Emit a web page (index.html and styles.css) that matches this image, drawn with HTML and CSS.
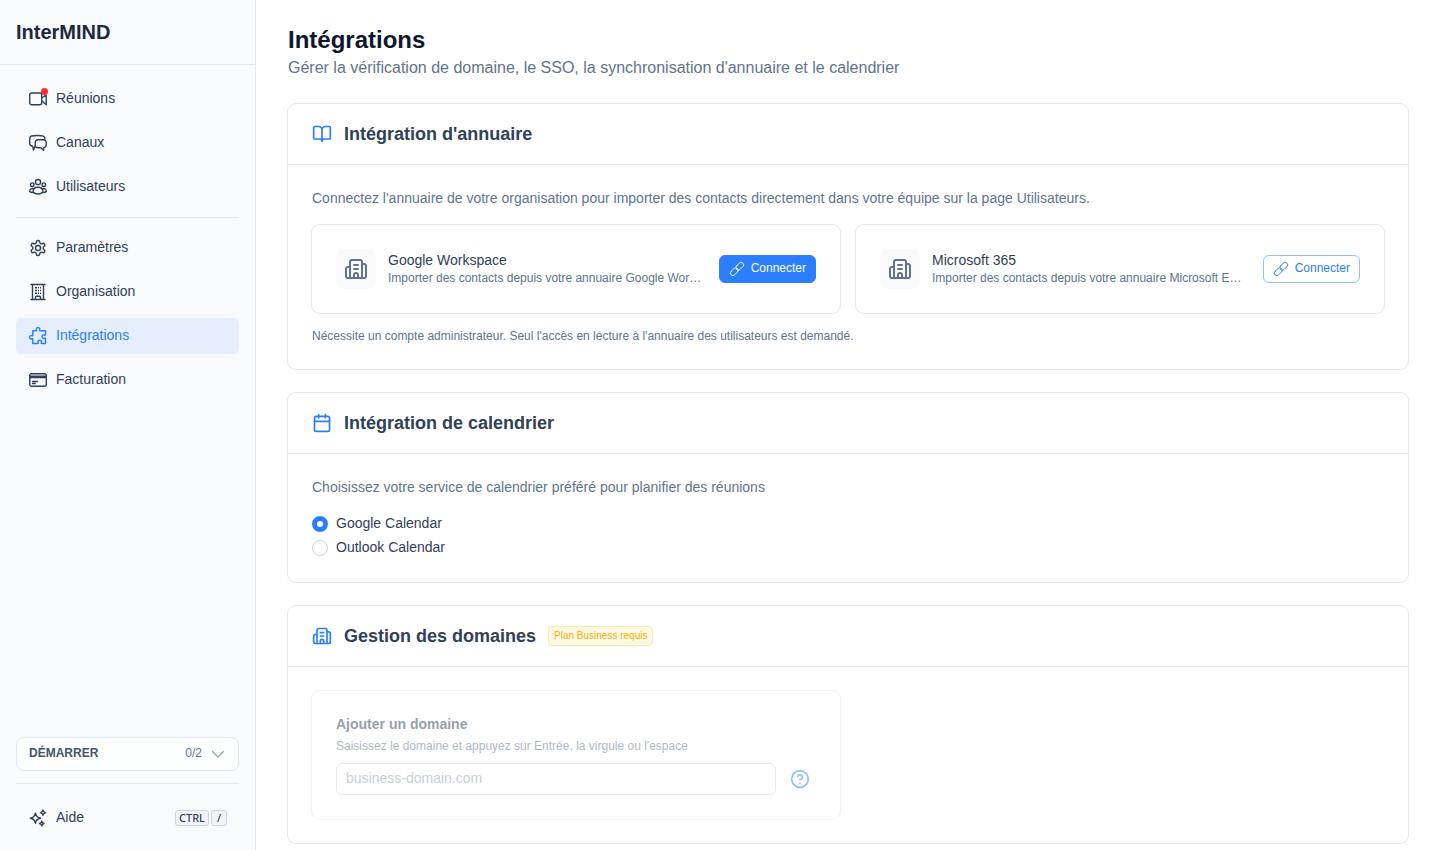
FILE: index.html
```html
<!DOCTYPE html>
<html lang="fr">
  <head>
    <meta charset="utf-8">
    <meta name="viewport" content="width=device-width, initial-scale=1">
    <title>Intégrations - InterMIND</title>
    <link rel="stylesheet" href="styles.css">
  </head>
  <body>
    <!-- shared icons -->
    <svg class="sprite" aria-hidden="true">
      <symbol id="building" viewBox="0 0 24 24">
        <path d="M10 12h4M10 8h4M14 21v-3a2 2 0 0 0-4 0v3"/>
        <path d="M6 10H4a2 2 0 0 0-2 2v7a2 2 0 0 0 2 2h16a2 2 0 0 0 2-2V9a2 2 0 0 0-2-2h-2"/>
        <path d="M6 21V5a2 2 0 0 1 2-2h8a2 2 0 0 1 2 2v16"/>
      </symbol>
      <symbol id="link" viewBox="0 0 16 16">
        <rect x="6.200" y="2.800" width="9" height="5" rx="2.500" transform="rotate(-45 10.700 5.300)"/>
        <rect x=".8" y="8.200" width="9" height="5" rx="2.500" transform="rotate(-45 5.300 10.700)"/>
      </symbol>
    </svg>

    <div class="layout">
      <aside class="sidebar">
        <div class="brand">InterMIND</div>

        <nav class="menu">
          <a class="menu-item" href="#">
            <span class="menu-icon">
              <svg class="icon" viewBox="0 0 20 20"><rect x="1.700" y="4" width="12" height="11.800" rx="2"/><path d="M13.700 9l4.500-3v9.700l-4.500-4"/></svg>
              <span class="dot"></span>
            </span>
            Réunions
          </a>
          <a class="menu-item" href="#">
            <svg class="icon" viewBox="0 0 20 20"><path d="M7.200 13.400H6.800L5.500 17.200L4.600 13.200C2.600 12.900 1.700 11.900 1.700 10.300V5.500C1.700 2.900 3.500 2.500 9.500 2.500S16.700 3 17 6"/><path d="M9.800 6.800h5.800a2.600 2.600 0 0 1 2.600 2.600v2.700c0 1.400-.9 2.300-2.200 2.500l-.6 2.700-2.600-2.500h-3a2.600 2.600 0 0 1-2.600-2.600V9.400a2.600 2.600 0 0 1 2.600-2.600z"/></svg>
            Canaux
          </a>
          <a class="menu-item" href="#">
            <svg class="icon" viewBox="0 0 20 20"><circle cx="10" cy="5.100" r="2.600"/><circle cx="4.200" cy="7.700" r="1.800"/><circle cx="15.800" cy="7.700" r="1.800"/><path d="M5 14.700c0-3 2.100-4.500 5-4.500s5 1.500 5 4.500c-1 1.600-2.700 2.300-5 2.300s-4-.7-5-2.300z"/><path d="M5.300 11.700c-2.100-.5-3.500.5-3.700 2.600.7.900 1.700 1.400 3.400 1.300M14.700 11.700c2.100-.5 3.500.5 3.700 2.600-.7.900-1.700 1.400-3.400 1.300"/></svg>
            Utilisateurs
          </a>
        </nav>

        <nav class="menu menu-admin">
          <a class="menu-item" href="#">
            <svg class="icon gear" viewBox="0 0 24 24"><path d="M12.220 2h-.44a2 2 0 0 0-2 2v.18a2 2 0 0 1-1 1.730l-.43.25a2 2 0 0 1-2 0l-.15-.08a2 2 0 0 0-2.730.73l-.22.38a2 2 0 0 0 .73 2.730l.15.1a2 2 0 0 1 1 1.720v.51a2 2 0 0 1-1 1.740l-.15.09a2 2 0 0 0-.73 2.730l.22.38a2 2 0 0 0 2.730.73l.15-.08a2 2 0 0 1 2 0l.43.25a2 2 0 0 1 1 1.730V20a2 2 0 0 0 2 2h.44a2 2 0 0 0 2-2v-.18a2 2 0 0 1 1-1.730l.43-.25a2 2 0 0 1 2 0l.15.08a2 2 0 0 0 2.730-.73l.22-.39a2 2 0 0 0-.73-2.730l-.15-.08a2 2 0 0 1-1-1.740v-.5a2 2 0 0 1 1-1.740l.15-.09a2 2 0 0 0 .73-2.730l-.22-.38a2 2 0 0 0-2.730-.73l-.15.08a2 2 0 0 1-2 0l-.43-.25a2 2 0 0 1-1-1.730V4a2 2 0 0 0-2-2z"/><circle cx="12" cy="12" r="3.400"/></svg>
            Paramètres
          </a>
          <a class="menu-item" href="#">
            <svg class="icon" viewBox="0 0 20 20"><path d="M3 2.500h14M3 17.500h14M4.500 2.500v15M15.500 2.500v15M7.500 17.500v-2.300a1 1 0 0 1 1-1h3a1 1 0 0 1 1 1v2.300"/><path stroke-linecap="butt" d="M7 5.700h2M10 5.700h1M12 5.700h1M7 8.500h2M10 8.500h1M12 8.500h1M7 11.300h2M10 11.300h1M12 11.300h1"/></svg>
            Organisation
          </a>
          <a class="menu-item active" href="#" aria-current="page">
            <svg class="icon" viewBox="0 0 20 20"><path d="M4.800 4.800h3.100c.6 0 .8-.5.500-1C7.800 2.600 8.700 1.600 10 1.600s2.200 1 1.600 2.200c-.3.500-.1 1 .5 1h5.400v3.800c0 .6-.5.800-1 .5-1.200-.8-2.500 0-2.500 1.500s1.300 2.300 2.500 1.500c.5-.3 1-.1 1 .5v4.900h-3.700c-.6 0-.8-.5-.5-1 .7-1.200-.2-2.200-1.600-2.200s-2.300 1-1.600 2.200c.3.500.1 1-.5 1H4.800v-4.300c0-.6-.5-.8-1-.5-1.200.7-2.200-.2-2.200-1.500s1-2.200 2.200-1.500c.5.300 1 .1 1-.5z"/></svg>
            Intégrations
          </a>
          <a class="menu-item" href="#">
            <svg class="icon" viewBox="0 0 20 20"><rect x="1.700" y="3.700" width="16.600" height="12.600" rx="2"/><path d="M1.700 6.300h16.600M1.700 7.500h16.600M4.500 11.500h5M4.500 13.500h2.700"/></svg>
            Facturation
          </a>
        </nav>

        <div class="sidebar-bottom">
          <button class="start" type="button">
            <span class="start-label">DÉMARRER</span>
            <span>0/2</span>
            <svg class="chevron" viewBox="0 0 16 16"><path d="M2.500 5.500L8 11l5.500-5.500"/></svg>
          </button>
          <div class="help">
            <a class="menu-item" href="#">
              <svg class="icon" viewBox="0 0 20 20"><path d="M7.500 5.200c.5 3.200 1.700 4.400 5 5-3.300.6-4.500 1.800-5 5-.6-3.200-1.800-4.400-5.200-5 3.400-.6 4.600-1.800 5.200-5z"/><path d="M15 2c.3 1.700.9 2.300 2.600 2.600-1.700.3-2.300.9-2.600 2.600-.3-1.700-.9-2.300-2.600-2.600C14.100 4.300 14.700 3.700 15 2zM13.800 13.200c.3 1.500.8 2 2.300 2.300-1.500.3-2 .8-2.300 2.300-.3-1.500-.8-2-2.300-2.300 1.500-.3 2-.8 2.300-2.300z"/></svg>
              <span class="help-label">Aide</span>
              <span class="keys"><kbd>CTRL</kbd><kbd>/</kbd></span>
            </a>
          </div>
        </div>
      </aside>

      <main class="main">
        <header class="page-title">
          <h1>Intégrations</h1>
          <p>Gérer la vérification de domaine, le SSO, la synchronisation d'annuaire et le calendrier</p>
        </header>

        <section class="card">
          <div class="card-header">
            <svg class="icon header-icon" viewBox="0 0 24 24"><path d="M12 7v14M3 18a1 1 0 0 1-1-1V4a1 1 0 0 1 1-1h5a4 4 0 0 1 4 4 4 4 0 0 1 4-4h5a1 1 0 0 1 1 1v13a1 1 0 0 1-1 1h-6a3 3 0 0 0-3 3 3 3 0 0 0-3-3z"/></svg>
            <h2>Intégration d'annuaire</h2>
          </div>
          <div class="card-body">
            <p class="text">Connectez l'annuaire de votre organisation pour importer des contacts directement dans votre équipe sur la page Utilisateurs.</p>
            <div class="columns">
              <div class="box provider">
                <div class="provider-icon"><svg><use href="#building"/></svg></div>
                <div class="provider-text">
                  <h3>Google Workspace</h3>
                  <p>Importer des contacts depuis votre annuaire Google Workspace</p>
                </div>
                <button class="connect primary" type="button"><svg><use href="#link"/></svg><span>Connecter</span></button>
              </div>
              <div class="box provider">
                <div class="provider-icon"><svg><use href="#building"/></svg></div>
                <div class="provider-text">
                  <h3>Microsoft 365</h3>
                  <p>Importer des contacts depuis votre annuaire Microsoft Entra ID</p>
                </div>
                <button class="connect" type="button"><svg><use href="#link"/></svg><span>Connecter</span></button>
              </div>
            </div>
            <p class="note">Nécessite un compte administrateur. Seul l'accès en lecture à l'annuaire des utilisateurs est demandé.</p>
          </div>
        </section>

        <section class="card">
          <div class="card-header">
            <svg class="icon header-icon" viewBox="0 0 24 24"><rect x="3" y="4" width="18" height="18" rx="2"/><path d="M16 2v4M8 2v4M3 10h18"/></svg>
            <h2>Intégration de calendrier</h2>
          </div>
          <div class="card-body">
            <p class="text">Choisissez votre service de calendrier préféré pour planifier des réunions</p>
            <div class="radios">
              <label><input type="radio" name="calendar" value="google" checked><span class="text">Google Calendar</span></label>
              <label><input type="radio" name="calendar" value="outlook"><span class="text">Outlook Calendar</span></label>
            </div>
          </div>
        </section>

        <section class="card">
          <div class="card-header">
            <svg class="icon header-icon"><use href="#building"/></svg>
            <h2>Gestion des domaines</h2>
            <span class="badge">Plan Business requis</span>
          </div>
          <div class="card-body">
            <div class="columns">
              <div class="box domain">
                <label class="text" for="domain">Ajouter un domaine</label>
                <p class="note">Saisissez le domaine et appuyez sur Entrée, la virgule ou l'espace</p>
                <div class="domain-row">
                  <input type="text" id="domain" placeholder="business-domain.com" disabled>
                  <button class="question" type="button" aria-label="Aide" disabled>
                    <svg class="icon" viewBox="0 0 24 24"><circle cx="12" cy="12" r="10"/><path d="M9.090 9a3 3 0 0 1 5.830 1c0 2-3 3-3 3M12 17h.01"/></svg>
                  </button>
                </div>
              </div>
            </div>
          </div>
        </section>
      </main>
    </div>
  </body>
</html>
```

FILE: styles.css
```css
* {
  box-sizing: border-box;
}

body {
  margin: 0;
  background-color: #fff;
  color: #314158;
  font-family: "Liberation Sans", Arial, sans-serif;
  font-size: 14px;
  line-height: 20px;
}

h1, h2, h3, p {
  margin: 0;
}

a {
  color: inherit;
  text-decoration: none;
}

button, input {
  font-family: inherit;
}

svg {
  fill: none;
  stroke: currentColor;
  stroke-width: 2;
  stroke-linecap: round;
  stroke-linejoin: round;
  flex-shrink: 0;
}

.sprite {
  display: none;
}

.icon {
  width: 20px;
  height: 20px;
}

.layout {
  display: flex;
  min-height: 100vh;
}

/* sidebar */
.sidebar {
  display: flex;
  flex-direction: column;
  flex-shrink: 0;
  width: 256px;
  background-color: #f8fafc;
  border-right: 1px solid #e2e8f0;
}

.brand {
  padding: 16px;
  border-bottom: 1px solid #e2e8f0;
  color: #1d293d;
  font-size: 20px;
  font-weight: bold;
  line-height: 32px;
}

.menu {
  display: flex;
  flex-direction: column;
  gap: 8px;
  margin: 16px 16px 12px;
}

.menu-admin {
  margin-top: 0;
  padding-top: 12px;
  border-top: 1px solid #e2e8f0;
}

.menu-item {
  display: flex;
  align-items: center;
  gap: 8px;
  height: 36px;
  padding: 0 12px 2px;
  border-radius: 6px;
}

.menu-item .icon {
  display: block;
  margin-top: 2px;
  stroke-width: 1.4;
}

.menu-item .gear {
  padding: 1px;
  stroke-width: 1.9;
}

.menu-item.active {
  background-color: #e4eefd;
  color: #2b7fff;
}

.menu-icon {
  position: relative;
}

.dot {
  position: absolute;
  top: 1px;
  right: 0;
  width: 7px;
  height: 7px;
  border-radius: 50%;
  background-color: #fb2c36;
}

.sidebar-bottom {
  margin: auto 16px 14px;
}

.start {
  display: flex;
  align-items: center;
  gap: 8px;
  width: 100%;
  height: 34px;
  padding: 0 12px 2px;
  background-color: #fdfefe;
  border: 1px solid #e2e8f0;
  border-radius: 8px;
  color: #62748e;
  font-size: 12px;
}

.start-label {
  flex: 1;
  color: #45556c;
  font-weight: bold;
  text-align: left;
}

.chevron {
  width: 16px;
  height: 16px;
  margin-top: 2px;
  color: #90a1b9;
  stroke-width: 1.2;
}

.help {
  margin-top: 12px;
  padding-top: 16px;
  border-top: 1px solid #e2e8f0;
}

.help-label {
  flex: 1;
}

.keys {
  display: flex;
  gap: 2px;
  margin-top: 2px;
}

kbd {
  min-width: 16px;
  height: 16px;
  padding: 0 3px;
  border: 1px solid #cad5e2;
  border-radius: 3px;
  background-color: #f1f5f9;
  font-family: "Noto Sans", sans-serif;
  font-size: 11px;
  font-weight: 500;
  line-height: 14px;
  text-align: center;
}

/* page */
.main {
  display: flex;
  flex: 1;
  flex-direction: column;
  gap: 24px;
  min-width: 0;
  padding: 24px 32px 0;
}

.page-title h1 {
  color: #0f172b;
  font-size: 24px;
  line-height: 32px;
}

.page-title p {
  color: #62748e;
  font-size: 16px;
  line-height: 24px;
}

.card, .box {
  border-radius: 8px;
  box-shadow: 0 0 0 1px #e2e8f0;
}

.card-header {
  display: flex;
  align-items: center;
  gap: 12px;
  padding: 16px 24px;
  border-bottom: 1px solid #e2e8f0;
}

.header-icon {
  color: #2b7fff;
}

.card-header h2 {
  font-size: 18px;
  line-height: 28px;
}

.badge {
  padding: 0 5px;
  border: 1px solid #fbe9a6;
  border-radius: 4px;
  background-color: #fef9e6;
  color: #f0b100;
  font-size: 10px;
  line-height: 18px;
}

.card-body {
  display: flex;
  flex-direction: column;
  gap: 16px;
  padding: 24px;
  color: #62748e;
}

.text {
  padding-bottom: 2px;
  line-height: 18px;
}

.note {
  padding-bottom: 2px;
  font-size: 12px;
  line-height: 14px;
}

.columns {
  display: grid;
  grid-template-columns: 1fr 1fr;
  gap: 16px;
}

.box {
  min-width: 0;
  padding: 24px;
}

.provider {
  display: flex;
  align-items: center;
}

.provider-icon {
  display: flex;
  align-items: center;
  justify-content: center;
  width: 40px;
  height: 40px;
  margin-right: 12px;
  border-radius: 8px;
  background-color: #f8fafc;
}

.provider-icon svg {
  width: 24px;
  height: 24px;
}

.provider-text {
  flex: 1;
  min-width: 0;
  margin-right: 16px;
  padding-bottom: 2px;
}

.provider-text h3 {
  color: #314158;
  font-size: 14px;
  font-weight: normal;
}

.provider-text p {
  overflow: hidden;
  font-size: 12px;
  line-height: 16px;
  text-overflow: ellipsis;
  white-space: nowrap;
}

.connect {
  display: flex;
  align-items: center;
  gap: 6px;
  height: 28px;
  padding: 0 9px;
  border: 1px solid #95bfff;
  border-radius: 6px;
  background-color: #fff;
  color: #2b7fff;
  font-size: 12px;
  line-height: 16px;
}

.connect span {
  padding-bottom: 2px;
}

.connect svg {
  width: 16px;
  height: 16px;
  stroke-width: 0.9;
}

.connect.primary {
  border-color: #2b7fff;
  background-color: #2b7fff;
  color: #fff;
}

.radios {
  display: flex;
  flex-direction: column;
  align-items: flex-start;
  gap: 4px;
  color: #314158;
}

.radios label {
  display: flex;
  align-items: center;
  gap: 8px;
}

.radios input {
  appearance: none;
  width: 16px;
  height: 16px;
  margin: 0;
  border: 1px solid #cad5e2;
  border-radius: 50%;
  background-color: #fff;
}

.radios input:checked {
  border: 5px solid #2b7fff;
}

.domain {
  opacity: 0.5;
}

.domain label {
  display: block;
  margin-bottom: 4px;
  color: #314158;
  font-weight: bold;
}

.domain-row {
  display: flex;
  gap: 8px;
  margin-top: 8px;
}

.domain-row input {
  flex: 1;
  min-width: 0;
  height: 32px;
  padding: 0 9px 2px;
  border: 1px solid #cad5e2;
  border-radius: 6px;
  background-color: #fff;
  font-size: 14px;
}

.domain-row input::placeholder {
  color: #90a1b9;
}

.question {
  display: flex;
  align-items: center;
  justify-content: center;
  width: 32px;
  height: 32px;
  padding: 0;
  border: 0;
  background: none;
  color: #2b7fff;
}
```
